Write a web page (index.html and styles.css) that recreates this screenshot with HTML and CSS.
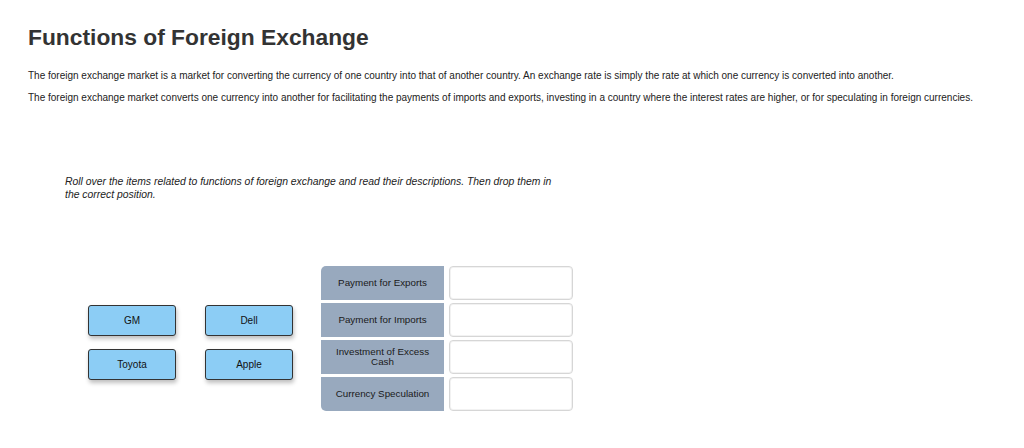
FILE: index.html
```html
<!DOCTYPE html>
<html lang="en">
<head>
    <meta charset="UTF-8">
    <meta name="viewport" content="width=device-width, initial-scale=1.0">
    <title>Functions of Foreign Exchange</title>
    <link rel="stylesheet" href="styles.css">
</head>
<body>
    <div class="page">
        <h1>Functions of Foreign Exchange</h1>
        <p class="intro">The foreign exchange market is a market for converting the currency of one country into that of another country. An exchange rate is simply the rate at which one currency is converted into another.</p>
        <p class="intro">The foreign exchange market converts one currency into another for facilitating the payments of imports and exports, investing in a country where the interest rates are higher, or for speculating in foreign currencies.</p>

        <div class="activity">
            <p class="instructions">Roll over the items related to functions of foreign exchange and read their descriptions. Then drop them in the correct position.</p>

            <div class="board">
                <div class="tiles">
                    <div class="tile">GM</div>
                    <div class="tile">Dell</div>
                    <div class="tile">Toyota</div>
                    <div class="tile">Apple</div>
                </div>

                <div class="targets">
                    <div class="target-row">
                        <div class="target-label first">Payment for Exports</div>
                        <div class="drop-box"></div>
                    </div>
                    <div class="target-row">
                        <div class="target-label">Payment for Imports</div>
                        <div class="drop-box"></div>
                    </div>
                    <div class="target-row">
                        <div class="target-label">Investment of Excess Cash</div>
                        <div class="drop-box"></div>
                    </div>
                    <div class="target-row">
                        <div class="target-label last">Currency Speculation</div>
                        <div class="drop-box"></div>
                    </div>
                </div>
            </div>
        </div>
    </div>
</body>
</html>
```

FILE: styles.css
```css
body {
    font-family: "Liberation Sans", Arial, Helvetica, sans-serif;
    margin: 0;
    background-color: #fff;
    color: #222;
}
.page {
    padding: 24px 28px 0 28px;
}
h1 {
    font-size: 22.8px;
    font-weight: bold;
    color: #333;
    margin: 0 0 20px 0;
    line-height: 26px;
}
.intro {
    font-size: 10px;
    line-height: 12px;
    margin: 0 0 10px 0;
    color: #222;
}
.activity {
    padding-left: 37px;
    margin-top: 71px;
}
.instructions {
    font-size: 10.4px;
    font-style: italic;
    line-height: 13px;
    width: 500px;
    margin: 0;
    color: #222;
}
.board {
    display: flex;
    align-items: flex-start;
    margin-top: 65px;
}
.tiles {
    display: grid;
    grid-template-columns: 88px 88px;
    column-gap: 29px;
    row-gap: 13px;
    margin-left: 23px;
    margin-top: 39px;
}
.tile {
    height: 29px;
    display: flex;
    align-items: center;
    justify-content: center;
    background-color: #8ccdf5;
    border: 1px solid #333;
    border-radius: 3px;
    box-shadow: 1px 3px 4px rgba(0,0,0,0.25);
    font-size: 10px;
    color: #111;
    cursor: move;
}
.targets {
    display: flex;
    flex-direction: column;
    gap: 3px;
    margin-left: 28px;
}
.target-row {
    display: flex;
    gap: 5px;
}
.target-label {
    width: 99px;
    height: 34px;
    padding: 0 12px;
    display: flex;
    align-items: center;
    justify-content: center;
    text-align: center;
    background-color: #98a9be;
    font-size: 9.8px;
    line-height: 10px;
    color: #1a1a1a;
}
.target-label.first {
    border-top-left-radius: 5px;
}
.target-label.last {
    border-bottom-left-radius: 5px;
}
.drop-box {
    width: 122px;
    height: 32px;
    background: #fff;
    border: 1px solid #d6d6d6;
    border-radius: 4px;
    box-shadow: inset 0 0 0 1px #f2f2f2;
}
```
